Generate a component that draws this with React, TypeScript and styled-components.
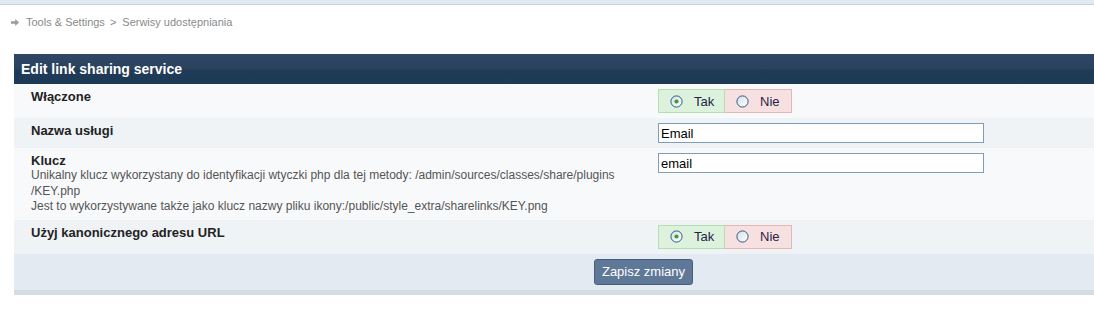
import React from "react";
import styled, { createGlobalStyle } from "styled-components";

const Global = createGlobalStyle`
  html, body { margin: 0; padding: 0; background: #ffffff; }
  body { font-family: "Liberation Sans", Arial, sans-serif; font-size: 13px; color: #222; }
`;

const TopBar = styled.div`
  height: 4px;
  background: #e3e9f0;
  border-bottom: 1px solid #c9d2dd;
`;

const Breadcrumb = styled.nav`
  display: flex;
  align-items: center;
  margin: 10px 0 0 11px;
  height: 14px;
  font-size: 11px;
  line-height: 14px;
  color: #8a8a8a;
`;

const Crumb = styled.span`
  color: #8a8a8a;
`;

const Sep = styled.span`
  margin: 0 6px 0 5px;
  color: #8a8a8a;
`;

const ArrowIcon = styled.svg`
  width: 8px;
  height: 7px;
  margin-right: 7px;
`;

const Panel = styled.section`
  margin: 25px 0 0 14px;
  border-bottom: 5px solid #d4dce4;
`;

const Header = styled.h2`
  margin: 0;
  height: 30px;
  padding-left: 7px;
  display: flex;
  align-items: center;
  font-size: 14px;
  font-weight: bold;
  color: #ffffff;
  background: linear-gradient(to bottom, #2f4765 0%, #2b425f 48%, #203b58 54%, #1e3956 100%);
`;

const Row = styled.div<{ $alt?: boolean }>`
  display: grid;
  grid-template-columns: 644px 1fr;
  background: ${(p) => (p.$alt ? "#eff3f6" : "#f8f9fb")};
`;

const LabelCell = styled.div`
  padding: 5px 8px 5px 17px;
`;

const FieldCell = styled.div`
  padding: 5px 0;
  display: flex;
  align-items: flex-start;
`;

const Label = styled.div`
  font-weight: bold;
  font-size: 13px;
  line-height: 15px;
  color: #222;
`;

const Desc = styled.div`
  font-size: 12px;
  line-height: 15.5px;
  color: #555;
`;

const RadioGroup = styled.div`
  display: flex;
  height: 24px;
`;

const RadioOption = styled.label<{ $yes?: boolean }>`
  box-sizing: border-box;
  width: 67px;
  height: 24px;
  display: flex;
  align-items: center;
  padding-left: 11px;
  gap: 11px;
  font-size: 13px;
  color: #1f2544;
  background: ${(p) => (p.$yes ? "#ddf2dd" : "#f7e0e0")};
  border: 1px solid ${(p) => (p.$yes ? "#b3e0b3" : "#e4b6b6")};
  ${(p) => (p.$yes ? "" : "border-left: none;")}
`;

const RadioSvg = styled.svg`
  width: 13px;
  height: 13px;
  flex: none;
`;

const TextInput = styled.input`
  box-sizing: border-box;
  width: 326px;
  height: 20px;
  margin: 0;
  border: 1px solid #7f9db9;
  padding: 0 2px;
  font-family: "Liberation Sans", Arial, sans-serif;
  font-size: 13px;
  color: #000;
  background: #fff;
  outline: none;
`;

const Footer = styled.div`
  background: #e4eaf1;
  padding: 5px 0 5px 580px;
  height: 26px;
`;

const SaveButton = styled.button`
  box-sizing: border-box;
  width: 99px;
  height: 26px;
  border: 1px solid #47607e;
  border-radius: 3px;
  background: #5f7898;
  color: #ffffff;
  font-family: "Liberation Sans", Arial, sans-serif;
  font-size: 13px;
  padding: 0;
  cursor: pointer;
`;

const Radio = ({ checked, id }: { checked?: boolean; id: string }) => (
  <RadioSvg viewBox="0 0 13 13">
    <defs>
      <linearGradient id={id} x1="0" y1="0" x2="1" y2="1">
        <stop offset="0" stopColor="#d8dde3" />
        <stop offset="1" stopColor="#ffffff" />
      </linearGradient>
    </defs>
    <circle cx="6.5" cy="6.5" r="5.6" fill={`url(#${id})`} stroke="#2b5a86" strokeWidth="1" />
    {checked && <circle cx="6.5" cy="6.5" r="2.1" fill="#2fa52f" />}
  </RadioSvg>
);

const YesNo = ({ name, value }: { name: string; value: boolean }) => (
  <RadioGroup>
    <RadioOption $yes>
      <Radio checked={value} id={`${name}-y`} />
      Tak
    </RadioOption>
    <RadioOption>
      <Radio checked={!value} id={`${name}-n`} />
      Nie
    </RadioOption>
  </RadioGroup>
);

export default function App() {
  return (
    <>
      <Global />
      <TopBar />
      <Breadcrumb>
        <ArrowIcon viewBox="0 0 8 7">
          <path d="M0 2.3 H4.2 V0 L8 3.5 L4.2 7 V4.7 H0 Z" fill="#9a9a9a" />
        </ArrowIcon>
        <Crumb>Tools &amp; Settings</Crumb>
        <Sep>&gt;</Sep>
        <Crumb>Serwisy udostępniania</Crumb>
      </Breadcrumb>
      <Panel>
        <Header>Edit link sharing service</Header>
        <Row>
          <LabelCell>
            <Label>Włączone</Label>
          </LabelCell>
          <FieldCell>
            <YesNo name="enabled" value={true} />
          </FieldCell>
        </Row>
        <Row $alt>
          <LabelCell>
            <Label>Nazwa usługi</Label>
          </LabelCell>
          <FieldCell>
            <TextInput defaultValue="Email" />
          </FieldCell>
        </Row>
        <Row>
          <LabelCell>
            <Label>Klucz</Label>
            <Desc>
              Unikalny klucz wykorzystany do identyfikacji wtyczki php dla tej metody: /admin/sources/classes/share/plugins
              <br />
              /KEY.php
              <br />
              Jest to wykorzystywane także jako klucz nazwy pliku ikony:/public/style_extra/sharelinks/KEY.png
            </Desc>
          </LabelCell>
          <FieldCell>
            <TextInput defaultValue="email" />
          </FieldCell>
        </Row>
        <Row $alt>
          <LabelCell>
            <Label>Użyj kanonicznego adresu URL</Label>
          </LabelCell>
          <FieldCell>
            <YesNo name="canonical" value={true} />
          </FieldCell>
        </Row>
        <Footer>
          <SaveButton>Zapisz zmiany</SaveButton>
        </Footer>
      </Panel>
    </>
  );
}
